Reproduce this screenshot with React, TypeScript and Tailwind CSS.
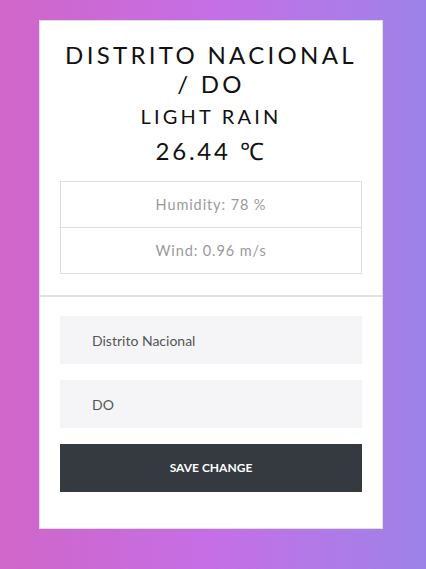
export default function App() {
    return (
        <div
            className="min-h-[569px] w-full bg-gradient-to-r from-[#d066c8] via-[#c56ee6] to-[#9c82e8] pt-5 pb-10"
            style={{ fontFamily: "Lato, 'Open Sans', sans-serif" }}
        >
            <div className="ml-[39px] w-[344px] border border-[#e0e0e0] bg-white pb-9">
                <div className="px-5 pt-[19px] text-center text-[#111]">
                    <h1 className="text-[24px] leading-[29px] tracking-[3.3px]">DISTRITO NACIONAL / DO</h1>
                    <h2 className="mt-[6px] text-[20px] leading-[24px] tracking-[3.2px]">LIGHT RAIN</h2>
                    <h3 className="mt-[8px] text-[24px] leading-[30px] tracking-[2.8px]">26.44 ℃</h3>
                </div>
                <div className="mx-5 mt-[15px] border border-[#dedede] text-center text-[14.5px] tracking-[0.9px] text-[#9a9a9a]">
                    <div className="h-[46px] border-b border-[#dedede] leading-[45px]">Humidity: 78 %</div>
                    <div className="h-[45px] leading-[45px]">Wind: 0.96 m/s</div>
                </div>
                <div className="mt-[21px] h-[2px] bg-[#e2e2e2]"></div>
                <div className="mx-5 mt-[19px] flex flex-col gap-4">
                    <input
                        defaultValue="Distrito Nacional"
                        className="h-12 w-full bg-[#f5f5f7] pl-8 text-[14px] text-[#555] outline-none"
                    />
                    <input
                        defaultValue="DO"
                        className="h-12 w-full bg-[#f5f5f7] pl-8 text-[14px] text-[#555] outline-none"
                    />
                    <button className="h-12 w-full bg-[#343a40] text-[12px] font-bold text-white">
                        SAVE CHANGE
                    </button>
                </div>
            </div>
        </div>
    );
}
